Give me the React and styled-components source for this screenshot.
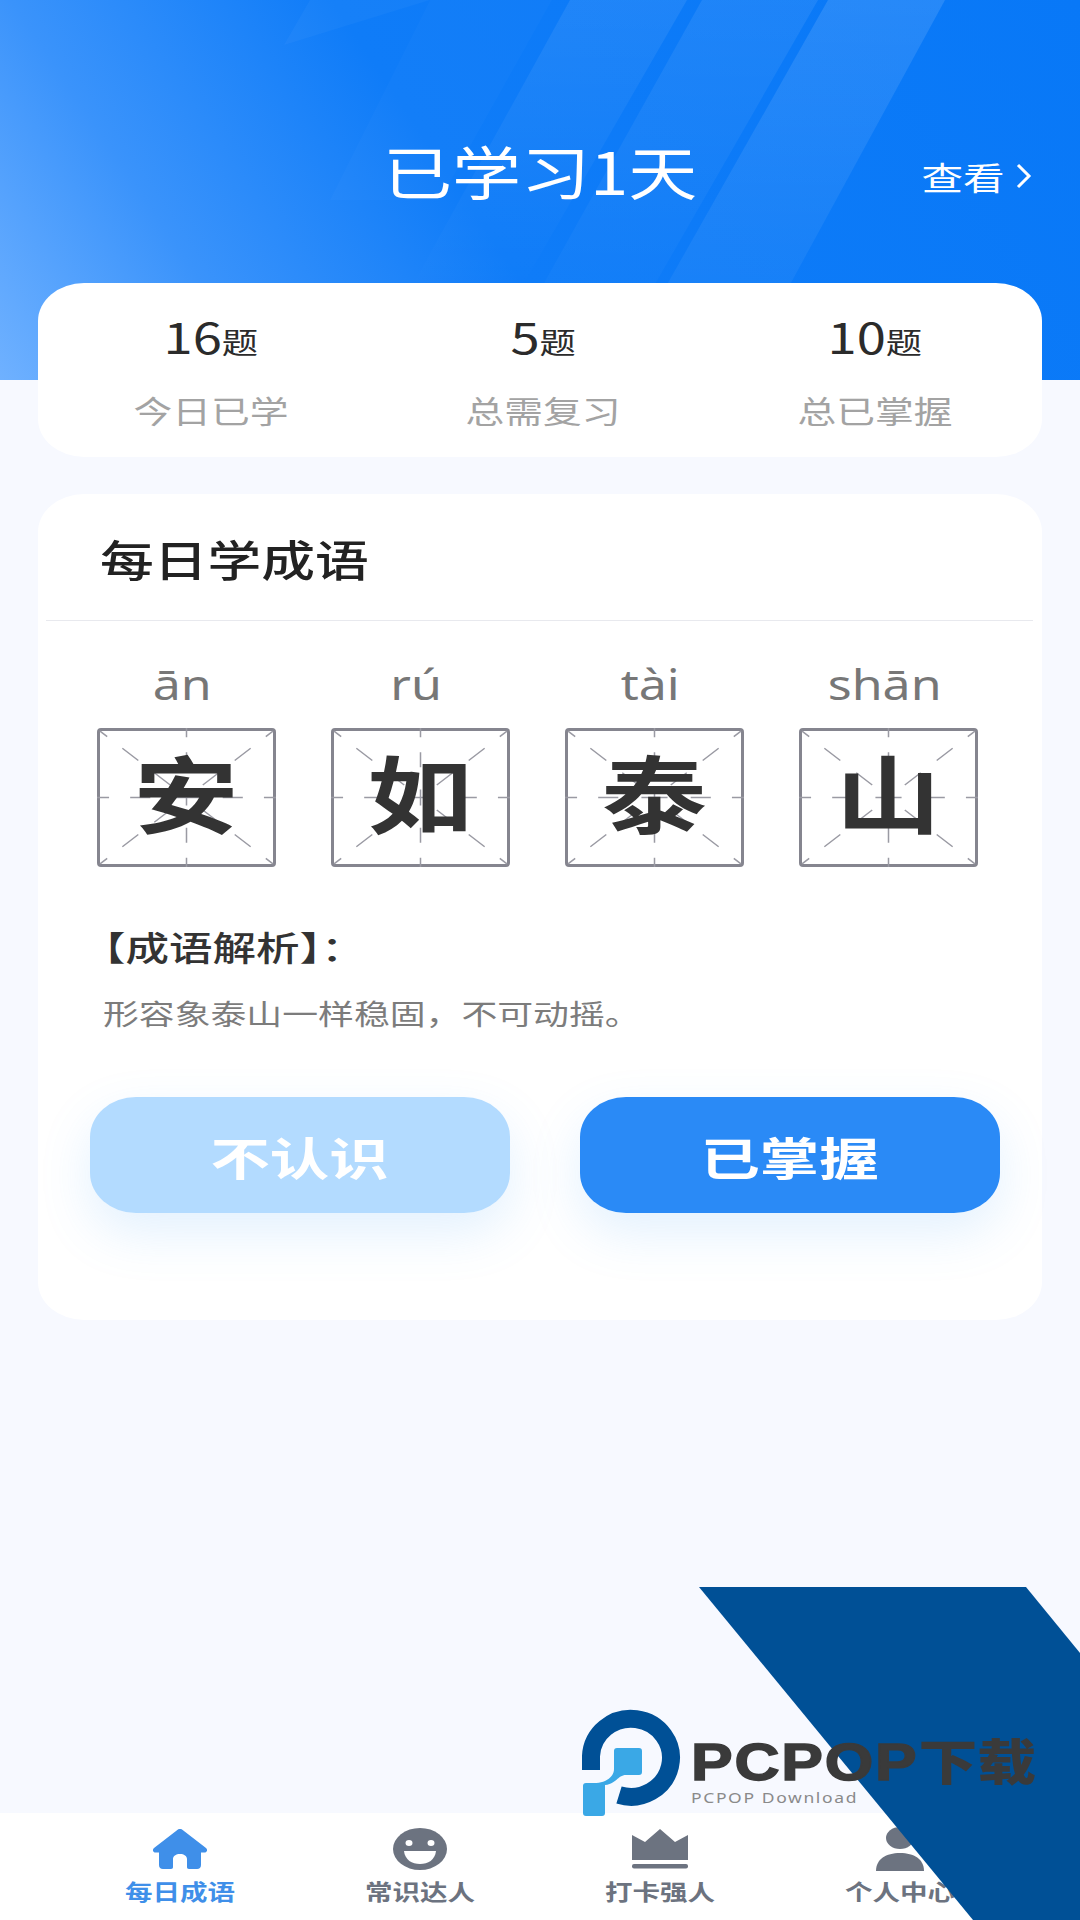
import React from 'react';
import styled, { createGlobalStyle } from 'styled-components';

const GlobalStyle = createGlobalStyle`
  html, body { margin: 0; padding: 0; background: #f7f9ff; }
  * { box-sizing: border-box; }
`;

const cjk = `"Noto Sans CJK SC", "Noto Sans", sans-serif`;

// the whole screenshot is stretched sideways, so text gets widened too
const Wide = styled.span`
  display: inline-block;
  white-space: nowrap;
  transform: scaleX(${p => p.$sx || 1.25});
  transform-origin: ${p => (p.$left ? 'left center' : 'center')};
`;

const Page = styled.div`
  position: relative;
  width: 1080px;
  height: 1920px;
  overflow: hidden;
  display: flex;
  flex-direction: column;
  background: #f7f9ff;
  font-family: ${cjk};
`;

const Header = styled.header`
  position: relative;
  height: 380px;
  flex: none;
  overflow: hidden;
  background: linear-gradient(56deg, #6fb1ff 0%, #3a93fb 20%, #0f7cf8 44%, #0878f7 100%);
`;

const Streaks = styled.svg`
  position: absolute;
  inset: 0;
`;

const HeaderRow = styled.div`
  position: relative;
  display: grid;
  grid-template-columns: 1fr auto 1fr;
  align-items: center;
  padding-top: 131px;
  color: #fff;
`;

const Title = styled.h1`
  grid-column: 2;
  margin: 0;
  font-size: 58px;
  line-height: 78px;
  font-weight: 400;
`;

const ViewMore = styled.div`
  justify-self: end;
  display: flex;
  align-items: center;
  gap: 20px;
  padding: 12px 47px 0 0;
  font-size: 32px;
  line-height: 44px;
`;

const Main = styled.main`
  display: flex;
  flex-direction: column;
  gap: 37px;
  padding: 0 38px;
  margin-top: -97px;
  position: relative;
`;

const StatsCard = styled.section`
  height: 174px;
  display: grid;
  grid-template-columns: repeat(3, 332px);
  padding: 25px 0 0 7px;
  background: #fff;
  border-radius: 46px / 38px;
`;

const Stat = styled.div`
  display: flex;
  flex-direction: column;
  align-items: center;
  gap: 19px;
`;

const StatValue = styled.div`
  color: #2b2b2b;
  font-size: 42px;
  line-height: 56px;
  b { font-weight: 400; }
  small { font-size: 29px; }
`;

const StatLabel = styled.div`
  color: #a3a3a3;
  font-size: 31px;
  line-height: 44px;
`;

const LessonCard = styled.section`
  height: 826px;
  background: #fff;
  border-radius: 46px / 38px;
`;

const CardTitle = styled.h2`
  height: 127px;
  margin: 0 9px 0 8px;
  padding: 38px 0 0 54px;
  border-bottom: 1.5px solid #e8e9ee;
  color: #222;
  font-size: 43px;
  line-height: 52px;
  font-weight: 500;
`;

const Idiom = styled.div`
  display: grid;
  grid-template-columns: repeat(4, 179px);
  column-gap: 55px;
  padding: 36px 0 0 59px;
`;

const Cell = styled.div`
  display: flex;
  flex-direction: column;
  align-items: center;
`;

const Pinyin = styled.div`
  height: 71px;
  margin-left: -8px;
  color: #777;
  font-family: "Noto Sans", sans-serif;
  font-size: 41px;
  line-height: 54px;
`;

const CharBox = styled.div`
  position: relative;
  width: 179px;
  height: 139px;
  padding-bottom: 13px;
  display: flex;
  align-items: center;
  justify-content: center;
  border: 3px solid #85858f;
  border-radius: 4px;
  color: #333;
  font-size: 84px;
  font-weight: 700;
  line-height: 1;
`;

const Grid = styled.svg`
  position: absolute;
  inset: -3px;
`;

const Glyph = styled(Wide)`
  position: relative;
`;

const Analysis = styled.div`
  padding: 58px 0 0 58px;
`;

const AnalysisHead = styled.div`
  margin-left: -14px;
  color: #333;
  font-size: 34px;
  line-height: 44px;
  font-weight: 500;
`;

const AnalysisBody = styled.div`
  margin-top: 24px;
  padding-left: 7px;
  color: #7c7c7c;
  font-size: 28px;
  line-height: 40px;
`;

const Actions = styled.div`
  display: flex;
  gap: 70px;
  padding: 64px 0 0 52px;
`;

const Action = styled.button`
  width: 420px;
  height: 116px;
  border: 0;
  padding: 4px 0 0;
  border-radius: 46px / 40px;
  color: #fff;
  font-family: ${cjk};
  font-size: 45px;
  line-height: 60px;
  font-weight: 700;
  background: ${p => (p.$primary ? '#2a8af6' : '#b3dbff')};
  box-shadow: 0 20px 50px rgba(90, 170, 250, 0.17);
`;

const TabBar = styled.nav`
  position: absolute;
  left: 0;
  right: 0;
  bottom: 0;
  height: 107px;
  display: grid;
  grid-template-columns: repeat(4, 240px);
  padding: 14px 60px 0;
  background: #fff;
`;

const Tab = styled.div`
  display: flex;
  flex-direction: column;
  align-items: center;
  color: ${p => (p.$active ? '#3f8fe9' : '#6c7380')};
  font-size: 22px;
  font-weight: 700;
  line-height: 28px;
`;

const TabIcon = styled.svg`
  height: 44px;
  width: 60px;
  margin-bottom: 5px;
  fill: currentColor;
`;

const Band = styled.svg`
  position: absolute;
  left: 699px;
  top: 1587px;
`;

const Logo = styled.svg`
  position: absolute;
  left: 580px;
  top: 1704px;
`;

const Brand = styled.div`
  position: absolute;
  left: 691px;
  top: 1731px;
  color: #3a3a3a;
`;

const BrandName = styled.div`
  font-family: "Liberation Sans", sans-serif;
  font-size: 52px;
  line-height: 56px;
  font-weight: 700;
  letter-spacing: 1.500px;
  -webkit-text-stroke: 1.5px #3a3a3a;
  small { font-family: ${cjk}; font-size: 49px; font-weight: 900; letter-spacing: 0; -webkit-text-stroke: 0; }
`;

const BrandSub = styled.div`
  color: #8a8a8a;
  font-family: "Noto Sans", sans-serif;
  font-size: 14px;
  line-height: 16px;
  letter-spacing: 1.3px;
`;

const stats = [
  { value: '16', label: '今日已学' },
  { value: '5', label: '总需复习' },
  { value: '10', label: '总已掌握' },
];

const chars = [
  { py: 'ān', ch: '安' },
  { py: 'rú', ch: '如' },
  { py: 'tài', ch: '泰' },
  { py: 'shān', ch: '山' },
];

const BoxLines = () => (
  <Grid width="179" height="139" viewBox="0 0 178 138" fill="none" stroke="#9a9aa3" strokeWidth="1.5">
    <path d="M0 69H178" strokeDasharray="12 21 20 23 26 23 20 21 12" />
    <path d="M89 0V138" strokeDasharray="9 15 15 22 16 22 15 15 9" />
    <g strokeDasharray="9 19 20 20 20 30">
      <path d="M3 3L89 69" />
      <path d="M175 3L89 69" />
      <path d="M3 135L89 69" />
      <path d="M175 135L89 69" />
    </g>
  </Grid>
);

const HomeIcon = () => (
  <TabIcon viewBox="0 0 60 44">
    <path d="M30 2c1.200 0 2.200.5 3 1.300L56 21c2 2 1 4.500-1.500 4.500H51V38c0 2.500-1.500 4-4 4h-8c-1.500 0-2-1-2-2v-8c0-3-3-5-7-5s-7 2-7 5v8c0 1-.5 2-2 2h-8c-2.500 0-4-1.500-4-4V25.500H5.500C3 25.500 2 23 4 21L27 3.300C27.800 2.500 28.800 2 30 2z" />
  </TabIcon>
);

const FaceIcon = () => (
  <TabIcon viewBox="0 0 60 44">
    <ellipse cx="30" cy="22" rx="27" ry="21" />
    <ellipse cx="19" cy="16" rx="3.500" ry="3" fill="#fff" />
    <ellipse cx="41" cy="16" rx="3.500" ry="3" fill="#fff" />
    <path d="M14 24H46C45 33 38 37 30 37S15 33 14 24z" fill="#fff" />
  </TabIcon>
);

const CrownIcon = () => (
  <TabIcon viewBox="0 0 60 44">
    <path d="M2 8L15 15 30 2 45 15 58 8V33H2z" />
    <rect x="2" y="37" width="56" height="4.500" rx="2" />
  </TabIcon>
);

const PersonIcon = () => (
  <TabIcon viewBox="0 0 60 44">
    <ellipse cx="30" cy="11" rx="14" ry="11" />
    <path d="M6 44c0-12 10-18 24-18s24 6 24 18z" />
  </TabIcon>
);

const tabs = [
  { label: '每日成语', icon: <HomeIcon />, active: true },
  { label: '常识达人', icon: <FaceIcon /> },
  { label: '打卡强人', icon: <CrownIcon /> },
  { label: '个人中心', icon: <PersonIcon /> },
];

export default function App() {
  return (
    <Page>
      <GlobalStyle />
      <Header>
        <Streaks width="1080" height="380" viewBox="0 0 1080 380">
          <defs>
            <linearGradient id="fadeStrong" x1="0" y1="0" x2="0" y2="1">
              <stop offset="0" stopColor="#fff" stopOpacity="0.12" />
              <stop offset="1" stopColor="#fff" stopOpacity="0.02" />
            </linearGradient>
            <linearGradient id="fadeSoft" x1="0" y1="0" x2="0" y2="1">
              <stop offset="0" stopColor="#fff" stopOpacity="0.08" />
              <stop offset="1" stopColor="#fff" stopOpacity="0" />
            </linearGradient>
          </defs>
          <polygon points="828,0 945,0 738,380 613,380" fill="url(#fadeStrong)" />
          <polygon points="702,0 818,0 600,380 490,380" fill="url(#fadeSoft)" />
          <polygon points="570,0 687,0 520,290 410,290" fill="url(#fadeSoft)" />
          <polygon points="430,0 552,0 440,200 330,200" fill="#fff" opacity="0.02" />
          <polygon points="310,0 430,0 284,45" fill="#fff" opacity="0.03" />
        </Streaks>
        <HeaderRow>
          <Title><Wide $sx={1.19}>已学习1天</Wide></Title>
          <ViewMore>
            <Wide $sx={1.3}>查看</Wide>
            <svg width="18" height="28" viewBox="0 0 18 28" fill="none" stroke="#fff" strokeWidth="3">
              <path d="M3 3L14 14 3 25" />
            </svg>
          </ViewMore>
        </HeaderRow>
      </Header>

      <Main>
        <StatsCard>
          {stats.map(s => (
            <Stat key={s.label}>
              <StatValue>
                <Wide><b>{s.value}</b><small>题</small></Wide>
              </StatValue>
              <StatLabel><Wide>{s.label}</Wide></StatLabel>
            </Stat>
          ))}
        </StatsCard>

        <LessonCard>
          <CardTitle><Wide $left>每日学成语</Wide></CardTitle>
          <Idiom>
            {chars.map(c => (
              <Cell key={c.ch}>
                <Pinyin><Wide $sx={1.22}>{c.py}</Wide></Pinyin>
                <CharBox>
                  <BoxLines />
                  <Glyph>{c.ch}</Glyph>
                </CharBox>
              </Cell>
            ))}
          </Idiom>
          <Analysis>
            <AnalysisHead><Wide $left $sx={1.28}>【成语解析】：</Wide></AnalysisHead>
            <AnalysisBody><Wide $left $sx={1.28}>形容象泰山一样稳固，不可动摇。</Wide></AnalysisBody>
          </Analysis>
          <Actions>
            <Action><Wide $sx={1.32}>不认识</Wide></Action>
            <Action $primary><Wide $sx={1.32}>已掌握</Wide></Action>
          </Actions>
        </LessonCard>
      </Main>

      <TabBar>
        {tabs.map(t => (
          <Tab key={t.label} $active={t.active}>
            {t.icon}
            <Wide>{t.label}</Wide>
          </Tab>
        ))}
      </TabBar>

      {/* download site watermark stamped over the screen */}
      <Band width="381" height="333" viewBox="0 0 381 333">
        <polygon points="0,0 327,0 381,66 381,333 274,333" fill="#005096" />
      </Band>
      <Logo width="104" height="114" viewBox="0 0 104 114">
        <path d="M11 66V52A40 39 0 1 1 39 91" fill="none" stroke="#005096" strokeWidth="18" />
        <path d="M37 44h22a3 3 0 0 1 3 3v21a3 3 0 0 1-3 3H46c-8 0-10 9-21 10v28a3 3 0 0 1-3 3H6a3 3 0 0 1-3-3V82a3 3 0 0 1 3-3h8c12 0 20-6 20-14V47a3 3 0 0 1 3-3z" fill="#3aa8e6" />
      </Logo>
      <Brand>
        <BrandName>
          <Wide $left $sx={1.2}>PCPOP<small>下载</small></Wide>
        </BrandName>
        <BrandSub><Wide $left>PCPOP Download</Wide></BrandSub>
      </Brand>
    </Page>
  );
}
